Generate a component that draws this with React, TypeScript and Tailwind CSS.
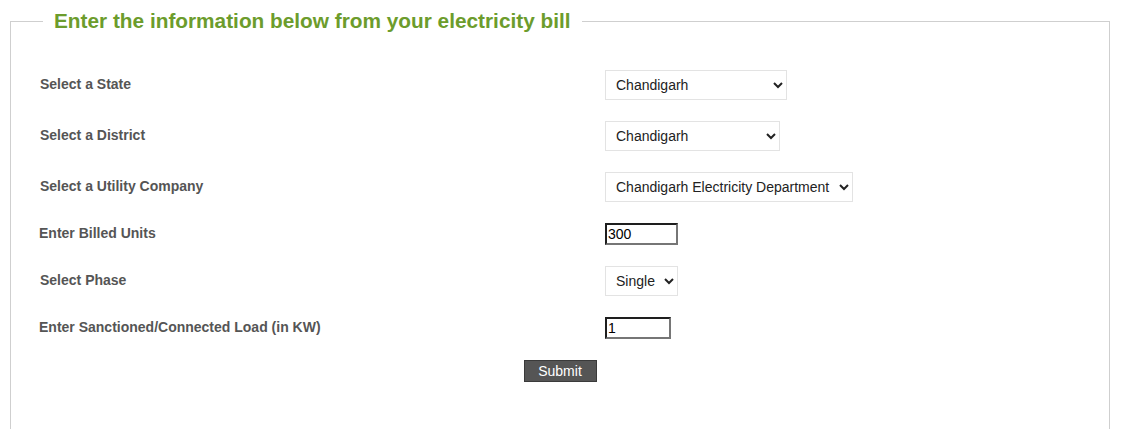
import { useState } from "react";

type Field =
  | { kind: "select"; label: string; value: string; options: string[]; width: string }
  | { kind: "input"; label: string; value: string; width: string };

const fields: Field[] = [
  { kind: "select", label: "Select a State", value: "Chandigarh", options: ["Chandigarh", "Delhi", "Punjab", "Haryana"], width: "w-[182px]" },
  { kind: "select", label: "Select a District", value: "Chandigarh", options: ["Chandigarh"], width: "w-[175px]" },
  {
    kind: "select",
    label: "Select a Utility Company",
    value: "Chandigarh Electricity Department",
    options: ["Chandigarh Electricity Department"],
    width: "w-[248px]",
  },
  { kind: "input", label: "Enter Billed Units", value: "300", width: "w-[73px]" },
  { kind: "select", label: "Select Phase", value: "Single", options: ["Single", "Three"], width: "w-[73px]" },
  { kind: "input", label: "Enter Sanctioned/Connected Load (in KW)", value: "1", width: "w-[66px]" },
];

const FormRow = ({ field }: { field: Field }) => {
  const [value, setValue] = useState(field.value);

  return (
    <div className={`flex items-center ${field.kind === "select" ? "h-[51px]" : "h-[43px]"}`}>
      <label
        className={`w-[594px] shrink-0 text-[14px] font-bold text-[#555] ${field.kind === "select" ? "pl-[29px]" : "pl-[28px]"}`}
      >
        {field.label}
      </label>
      {field.kind === "select" ? (
        <select
          value={value}
          onChange={(e) => setValue(e.target.value)}
          className={`${field.width} h-[30px] border border-[#e3e3e3] bg-white pl-[6px] text-[14px] text-[#222]`}
        >
          {field.options.map((o) => (
            <option key={o}>{o}</option>
          ))}
        </select>
      ) : (
        <input
          type="text"
          value={value}
          onChange={(e) => setValue(e.target.value)}
          className={`${field.width} h-[22px] border-2 border-t-[#1e1e1e] border-l-[#1e1e1e] border-r-[#767676] border-b-[#767676] bg-white px-[1px] text-[14px] text-black`}
        />
      )}
    </div>
  );
};

export default function App() {
  return (
    <div className="h-[429px] overflow-hidden bg-white font-['Liberation_Sans',Arial,sans-serif]">
      <fieldset className="ml-[10px] mt-[9px] w-[1100px] border border-[#cfcfcf] pb-[60px] pt-[26px]">
        <legend className="ml-[32px] px-[11px] text-[20.8px] font-bold leading-[24px] text-[#6c9c2c]">
          Enter the information below from your electricity bill
        </legend>
        {fields.map((f) => (
          <FormRow key={f.label} field={f} />
        ))}
        <div className="flex h-[43px] items-center justify-center">
          <button
            type="submit"
            className="h-[22px] w-[73px] border border-[#3a3a3a] bg-[#555] text-[14px] text-white"
          >
            Submit
          </button>
        </div>
      </fieldset>
    </div>
  );
}
